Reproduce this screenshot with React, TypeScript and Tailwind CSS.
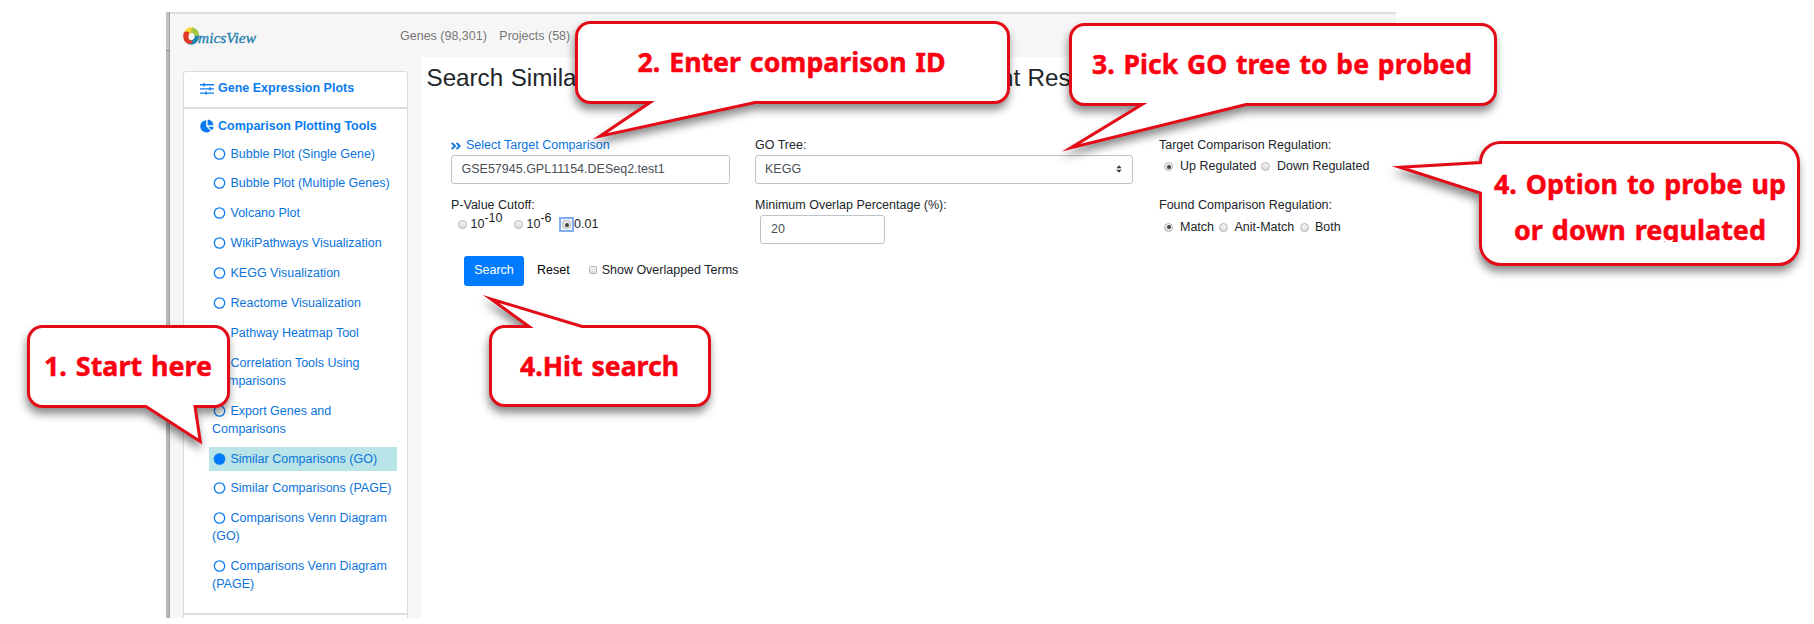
import React from "react";

const tools: { label: string; active?: boolean }[] = [
  { label: "Bubble Plot (Single Gene)" },
  { label: "Bubble Plot (Multiple Genes)" },
  { label: "Volcano Plot" },
  { label: "WikiPathways Visualization" },
  { label: "KEGG Visualization" },
  { label: "Reactome Visualization" },
  { label: "Pathway Heatmap Tool" },
  { label: "Correlation Tools Using Comparisons" },
  { label: "Export Genes and Comparisons" },
  { label: "Similar Comparisons (GO)", active: true },
  { label: "Similar Comparisons (PAGE)" },
  { label: "Comparisons Venn Diagram (GO)" },
  { label: "Comparisons Venn Diagram (PAGE)" },
];

function Logo() {
  return (
    <div className="flex h-[20px] w-[76px]">
      <svg width="76" height="20" viewBox="0 0 76 20" className="overflow-visible">
        <path d="M1 7 C2 1 7 -1 11 1 C15 3 16.500 8 15 12 C13 7 9 5 6 7 C3 6 2 6 1 7Z" fill="#f2d437" />
        <path d="M9 .6 C15 1 18 8 15 13.500 C14 15 12 16 10 16 C12 12 12 8 8 5.500 Z" fill="#a3c644" />
        <path d="M15.600 8.500 C16.500 15 11 18.500 7 17.600 C4 17 2.500 15 2 13 C6 15 11 13.500 12 9 Z" fill="#1b86b5" />
        <path d="M.8 5.500 C-.8 11 1 16 6 17 C8 17 9 16 10 14 C5.500 14 4.500 10 6.500 5.500 C4 4 2 4 .8 5.500Z" fill="#e2392b" />
        <ellipse cx="8.800" cy="9.200" rx="2.700" ry="3.300" fill="#f6f6f6" />
        <text x="15" y="15.600" textLength="58" lengthAdjust="spacingAndGlyphs" fontSize="15.500" fontStyle="italic" fontFamily="'Liberation Serif', serif" fill="#2580ae" stroke="#2580ae" strokeWidth=".35">
          micsView
        </text>
      </svg>
    </div>
  );
}

function Radio({ checked }: { checked?: boolean }) {
  return (
    <span className="flex size-[9px] shrink-0 items-center justify-center rounded-full border border-[#b4b4b4] bg-linear-to-b from-[#f4f4f4] to-[#dcdcdc]">
      {checked && <span className="size-[4px] rounded-full bg-[#444]" />}
    </span>
  );
}

function Sidebar() {
  return (
    <aside className="h-[561px] w-[251px] shrink-0 overflow-hidden bg-[#f6f6f6] pt-[14px] pl-[13px]">
      <div className="h-[37px] w-[225px] rounded-t-[3px] border border-[#dcdcdc] bg-white pt-[7.500px] pl-[16px]">
        <a className="flex h-[18px] items-center gap-[4px] font-bold text-[#0a7cf0]">
          <svg width="14" height="12" viewBox="0 0 14 12" fill="none" stroke="currentColor" strokeWidth="1.400">
            <path d="M0 1.700H14M0 5.900H14M0 10.100H14M4 0V3.400M10 4.200V7.600M6 8.400V11.800" />
          </svg>
          Gene Expression Plots
        </a>
      </div>
      <div className="h-[505.500px] w-[225px] border border-[#dcdcdc] bg-white pt-[8px]">
        <a className="flex h-[18px] items-center gap-[4px] pl-[16px] font-bold text-[#0a7cf0]">
          <svg width="14" height="14" viewBox="0 0 14 14" fill="currentColor">
            <path d="M6.200 1.200V7.300L10.600 11.700A6.100 6.100 0 1 1 6.200 1.200Z" />
            <path d="M7.600 .4A6 6 0 0 1 13.500 6.300H7.600Z" />
            <path d="M8.200 7.700H13.600A6 6 0 0 1 11.900 11.300Z" />
          </svg>
          Comparison Plotting Tools
        </a>
        <ul className="flex flex-col gap-[5.900px] pt-[6.500px] pl-[25px]">
          {tools.map((t) => (
            <li
              key={t.label}
              className={
                t.active
                  ? "w-[188px] bg-[#b9e4e8] py-[3px] pl-[3px] leading-[18px] text-[#0a74dc]"
                  : "w-[188px] py-[3px] pl-[3px] leading-[18px] text-[#0a74dc]"
              }
            >
              <svg width="15" height="12" viewBox="0 0 15 12" className="mr-[3.500px] inline-block align-[-2px]">
                <circle cx="7.500" cy="6" r="5.200" fill={t.active ? "#007bff" : "none"} stroke="#0a7cf0" strokeWidth="1.300" />
              </svg>
              {t.label}
            </li>
          ))}
        </ul>
      </div>
      <div className="h-[20px] w-[225px] border border-[#dcdcdc] bg-white" />
    </aside>
  );
}

function SearchForm() {
  return (
    <main className="w-[975px] overflow-hidden text-[#212529]">
      <h1 className="mt-[6px] ml-[5.500px] text-[24.200px] leading-[30px] [word-spacing:0.8px] whitespace-nowrap">
        Search Similar Comparisons Based on GO Enrichment Results
      </h1>
      <div className="mt-[43px] flex pl-[30px]">
        <section className="w-[304px]">
          <a className="flex h-[19px] items-center gap-[5px] text-[#0a74dc]">
            <svg width="10" height="8" viewBox="0 0 10 8" fill="none" stroke="currentColor" strokeWidth="1.900">
              <path d="M.8 .8L4 4L.8 7.200M5.500 .8L8.700 4L5.500 7.200" />
            </svg>
            Select Target Comparison
          </a>
          <div className="flex h-[29px] w-[279px] items-center rounded-[3px] border border-[#bcc4cb] px-[9.500px] pb-[1px] text-[#495057]">
            GSE57945.GPL11154.DESeq2.test1
          </div>
          <div className="mt-[12px] h-[18px] leading-[18px]">P-Value Cutoff:</div>
          <div className="mt-[1px] flex h-[18px] items-center">
            <span className="mt-px ml-[6.500px] flex"><Radio /></span>
            <span className="ml-[4px] w-[33px] leading-[18px] whitespace-nowrap">
              10<span className="relative -top-[6px]">-10</span>
            </span>
            <span className="mt-px ml-[10px] flex"><Radio /></span>
            <span className="ml-[4px] w-[25px] leading-[18px] whitespace-nowrap">
              10<span className="relative -top-[6px]">-6</span>
            </span>
            <span className="mt-[1px] ml-[7.500px] flex size-[15px] items-center justify-center border-2 border-[#82aef0] bg-[#eef4fd]">
              <Radio checked />
            </span>
            <span>0.01</span>
          </div>
        </section>
        <section className="w-[404px]">
          <div className="h-[19px] leading-[19px]">GO Tree:</div>
          <div className="flex h-[29px] w-[378px] items-center justify-between rounded-[3px] border border-[#bcc4cb] pr-[10px] pb-[1px] pl-[9px] text-[#495057]">
            <span>KEGG</span>
            <svg width="6" height="8" viewBox="0 0 6 8" fill="#343a40">
              <path d="M0.300 3.200L3 0.200L5.700 3.200ZM0.300 4.800L3 7.800L5.700 4.800Z" />
            </svg>
          </div>
          <div className="mt-[12px] h-[19px] leading-[18px]">Minimum Overlap Percentage (%):</div>
          <div className="ml-[5px] flex h-[29px] w-[125px] items-center rounded-[3px] border border-[#bcc4cb] px-[10px] text-[#495057]">
            20
          </div>
        </section>
        <section>
          <div className="h-[19px] leading-[19px]">Target Comparison Regulation:</div>
          <div className="mt-[2px] flex h-[18px] items-center pl-[5px] whitespace-nowrap">
            <span className="mt-px"><Radio checked /></span>
            <span className="ml-[7px] w-[76px]">Up Regulated</span>
            <span className="mt-px ml-[5px]"><Radio /></span>
            <span className="ml-[7px]">Down Regulated</span>
          </div>
          <div className="mt-[21px] h-[18px] leading-[18px]">Found Comparison Regulation:</div>
          <div className="mt-[4px] flex h-[18px] items-center pl-[5px] whitespace-nowrap">
            <Radio checked />
            <span className="ml-[7px] w-[34px]">Match</span>
            <span className="ml-[5px]"><Radio /></span>
            <span className="ml-[6.500px] w-[60px]">Anit-Match</span>
            <span className="ml-[5px]"><Radio /></span>
            <span className="ml-[6.500px]">Both</span>
          </div>
        </section>
      </div>
      <div className="mt-[12px] flex items-center pl-[43px]">
        <button className="flex h-[30px] w-[60px] items-center justify-center rounded-[3px] bg-[#007bff] pb-[1px] text-white">Search</button>
        <button className="ml-[13px] pb-[1px] text-black">Reset</button>
        <span className="mb-[2px] ml-[19px] size-[8px] rounded-[1.500px] border border-[#b4b4b4] bg-linear-to-b from-[#f4f4f4] to-[#dcdcdc]" />
        <span className="ml-[5px] pb-[1px]">Show Overlapped Terms</span>
      </div>
    </main>
  );
}

type Line = { text: string; x: number; y: number; width: number; clipped?: boolean };

function Callout({ outline, lines }: { outline: string; lines: Line[] }) {
  return (
    <g>
      <path
        d={outline}
        fill="#fff"
        stroke="#e30b17"
        strokeWidth="3"
        strokeMiterlimit="20"
        className="[filter:drop-shadow(-1px_6px_4px_rgba(0,0,0,0.45))]"
      />
      {lines.map((l) => (
        <text
          key={l.text}
          x={l.x}
          y={l.y}
          textLength={l.width}
          lengthAdjust="spacingAndGlyphs"
          fill="#fb0010"
          stroke="#fb0010"
          strokeWidth=".5"
          fontSize="27.500"
          fontWeight="700"
          fontFamily="'Noto Sans', 'Open Sans', sans-serif"
          clipPath={l.clipped ? "url(#line-clip)" : undefined}
          className="[font-variant-ligatures:none] [word-spacing:2px]"
        >
          {l.text}
        </text>
      ))}
    </g>
  );
}

function Callouts() {
  return (
    <svg width="1814" height="624" viewBox="0 0 1814 624" className="pointer-events-none absolute top-0 left-0">
      <defs>
        <clipPath id="line-clip">
          <rect x="1500" y="205" width="290" height="37" />
        </clipPath>
      </defs>
      <Callout
        outline="M42.500 326.500H214.500A14 14 0 0 1 228.500 340.500V392.500A14 14 0 0 1 214.500 406.500H195L200.300 441.500L146 406.500H42.500A14 14 0 0 1 28.500 392.500V340.500A14 14 0 0 1 42.500 326.500Z"
        lines={[{ text: "1. Start here", x: 44, y: 375.7, width: 168 }]}
      />
      <Callout
        outline="M590.500 22.500H994.500A14 14 0 0 1 1008.500 36.500V88.500A14 14 0 0 1 994.500 102.500H755L600 136.200L650 102.500H590.500A14 14 0 0 1 576.500 88.500V36.500A14 14 0 0 1 590.500 22.500Z"
        lines={[{ text: "2. Enter comparison ID", x: 637.5, y: 72, width: 308 }]}
      />
      <Callout
        outline="M1084.500 24.500H1481.500A14 14 0 0 1 1495.500 38.500V90.500A14 14 0 0 1 1481.500 104.500H1246L1071 147.600L1142 104.500H1084.500A14 14 0 0 1 1070.500 90.500V38.500A14 14 0 0 1 1084.500 24.500Z"
        lines={[{ text: "3. Pick GO tree to be probed", x: 1092, y: 74, width: 380 }]}
      />
      <Callout
        outline="M1500.500 142.500H1778.500A20 20 0 0 1 1798.500 162.500V244.500A20 20 0 0 1 1778.500 264.500H1500.500A20 20 0 0 1 1480.500 244.500V193L1400 167.300L1480.500 162.500A20 20 0 0 1 1500.500 142.500Z"
        lines={[
          { text: "4. Option to probe up", x: 1494, y: 193.7, width: 292 },
          { text: "or down regulated", x: 1514, y: 239.7, width: 252, clipped: true },
        ]}
      />
      <Callout
        outline="M504.500 326.500H529L491 299L582 326.500H695.500A14 14 0 0 1 709.500 340.500V391.500A14 14 0 0 1 695.500 405.500H504.500A14 14 0 0 1 490.500 391.500V340.500A14 14 0 0 1 504.500 326.500Z"
        lines={[{ text: "4.Hit search", x: 520, y: 376.3, width: 159 }]}
      />
    </svg>
  );
}

export default function App() {
  return (
    <div className="relative h-[624px] w-[1814px] overflow-hidden bg-white pt-[12px] pl-[166px] font-['Liberation_Sans',Arial,sans-serif] text-[12.500px]">
      <div className="flex h-[606px] w-[1230px] overflow-hidden">
        <div className="flex w-[4px] shrink-0 flex-col border-r border-[#a0a0a0] bg-[#b8b8b8]">
          <div className="h-[39px] border-b border-[#8c8c8c] bg-[#c4c4c4]" />
        </div>
        <div className="flex w-[1226px] shrink-0 flex-col">
          <header className="flex h-[45px] shrink-0 items-start border-t-2 border-[#dedede] bg-[#f6f6f6] pt-[13px] pl-[13px] text-[#777]">
            <Logo />
            <nav className="ml-[141px] flex gap-[12.500px] leading-[18px] whitespace-nowrap">
              <span>Genes (98,301)</span>
              <span>Projects (58)</span>
            </nav>
          </header>
          <div className="flex">
            <Sidebar />
            <SearchForm />
          </div>
        </div>
      </div>
      <Callouts />
    </div>
  );
}
